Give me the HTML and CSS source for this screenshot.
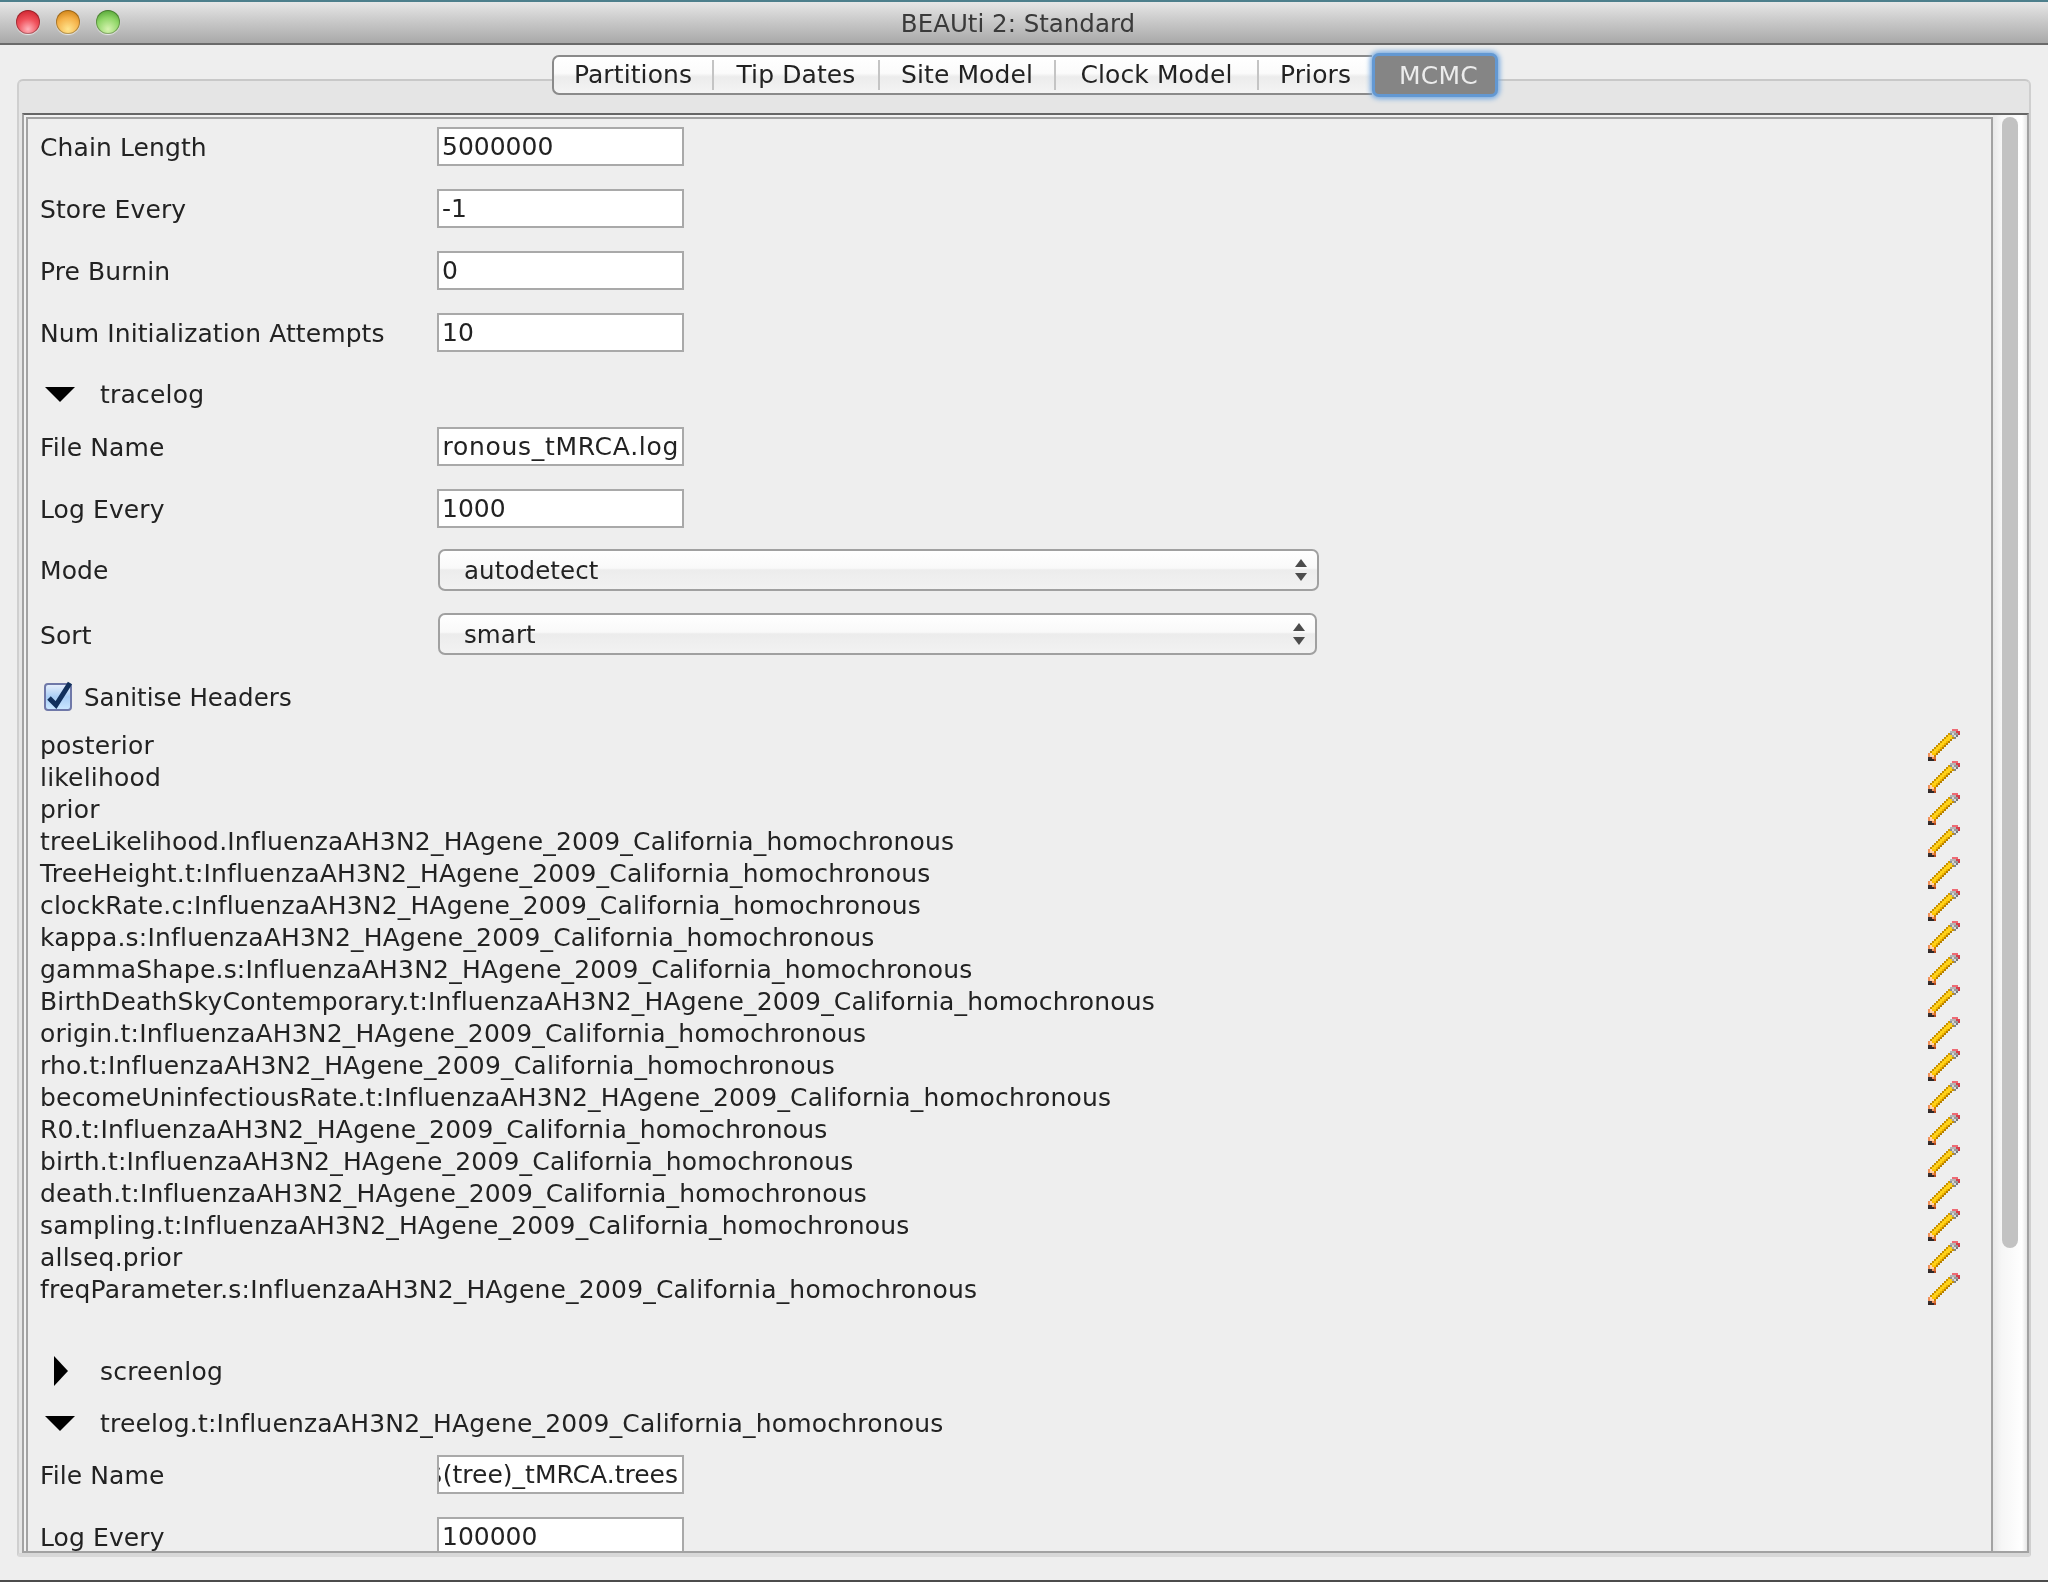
FILE: index.html
```html
<!DOCTYPE html>
<html lang="en">
<head>
<meta charset="utf-8">
<title>BEAUti 2: Standard</title>
<link rel="stylesheet" href="styles.css">
</head>
<body>
<svg class="defs" width="0" height="0" aria-hidden="true">
  <symbol id="pencil" viewBox="0 0 16 16" shape-rendering="crispEdges">
    <rect x="12" y="0" width="3" height="1" fill="#ee6a74"/>
    <rect x="11" y="1" width="3" height="1" fill="#b4b4b4"/><rect x="14" y="1" width="2" height="1" fill="#d8404c"/>
    <rect x="10" y="2" width="1" height="1" fill="#d09a00"/><rect x="11" y="2" width="1" height="1" fill="#8e8e8e"/><rect x="12" y="2" width="1" height="1" fill="#d6d6d6"/><rect x="13" y="2" width="2" height="1" fill="#9a9a9a"/><rect x="15" y="2" width="1" height="1" fill="#c83844"/>
    <rect x="9" y="3" width="1" height="1" fill="#c89000"/><rect x="10" y="3" width="2" height="1" fill="#ffd21a"/><rect x="12" y="3" width="1" height="1" fill="#a8a8a8"/><rect x="13" y="3" width="1" height="1" fill="#dcdcdc"/><rect x="14" y="3" width="1" height="1" fill="#777777"/>
    <rect x="8" y="4" width="1" height="1" fill="#c89000"/><rect x="9" y="4" width="3" height="1" fill="#ffd21a"/><rect x="12" y="4" width="1" height="1" fill="#c89000"/><rect x="13" y="4" width="1" height="1" fill="#858585"/>
    <rect x="7" y="5" width="1" height="1" fill="#c89000"/><rect x="8" y="5" width="3" height="1" fill="#ffd21a"/><rect x="11" y="5" width="1" height="1" fill="#b57f00"/>
    <rect x="6" y="6" width="1" height="1" fill="#c89000"/><rect x="7" y="6" width="2" height="1" fill="#ffd21a"/><rect x="9" y="6" width="1" height="1" fill="#efb400"/><rect x="10" y="6" width="1" height="1" fill="#b57f00"/>
    <rect x="5" y="7" width="1" height="1" fill="#c89000"/><rect x="6" y="7" width="2" height="1" fill="#ffd21a"/><rect x="8" y="7" width="1" height="1" fill="#efb400"/><rect x="9" y="7" width="1" height="1" fill="#b57f00"/>
    <rect x="4" y="8" width="1" height="1" fill="#c89000"/><rect x="5" y="8" width="2" height="1" fill="#ffd21a"/><rect x="7" y="8" width="1" height="1" fill="#efb400"/><rect x="8" y="8" width="1" height="1" fill="#b57f00"/>
    <rect x="3" y="9" width="1" height="1" fill="#c89000"/><rect x="4" y="9" width="2" height="1" fill="#ffd21a"/><rect x="6" y="9" width="1" height="1" fill="#efb400"/><rect x="7" y="9" width="1" height="1" fill="#b57f00"/>
    <rect x="2" y="10" width="1" height="1" fill="#c89000"/><rect x="3" y="10" width="2" height="1" fill="#ffd21a"/><rect x="5" y="10" width="1" height="1" fill="#efb400"/><rect x="6" y="10" width="1" height="1" fill="#b57f00"/>
    <rect x="1" y="11" width="1" height="1" fill="#c89000"/><rect x="2" y="11" width="2" height="1" fill="#ffd21a"/><rect x="4" y="11" width="1" height="1" fill="#efb400"/><rect x="5" y="11" width="1" height="1" fill="#b57f00"/>
    <rect x="0" y="12" width="1" height="1" fill="#f09058"/><rect x="1" y="12" width="1" height="1" fill="#ffd8b0"/><rect x="2" y="12" width="2" height="1" fill="#ffc400"/><rect x="4" y="12" width="1" height="1" fill="#b57f00"/>
    <rect x="0" y="13" width="1" height="1" fill="#f09058"/><rect x="1" y="13" width="2" height="1" fill="#ffd0a8"/><rect x="3" y="13" width="1" height="1" fill="#c88000"/>
    <rect x="0" y="14" width="2" height="1" fill="#3a3030"/><rect x="2" y="14" width="1" height="1" fill="#f09058"/><rect x="3" y="14" width="1" height="1" fill="#e07030"/>
    <rect x="0" y="15" width="3" height="1" fill="#302828"/><rect x="3" y="15" width="1" height="1" fill="#b04820"/>
  </symbol>
</svg>
<div class="window">
  <header class="titlebar">
    <div class="lights">
      <span class="light red"></span>
      <span class="light amber"></span>
      <span class="light green"></span>
    </div>
    <div class="title txt">BEAUti 2: Standard</div>
  </header>

  <nav class="tabs">
    <div class="tabgroup">
      <span class="tab txt w1">Partitions</span>
      <span class="tab txt w2">Tip Dates</span>
      <span class="tab txt w3">Site Model</span>
      <span class="tab txt w4">Clock Model</span>
      <span class="tab txt w5 last">Priors</span>
    </div>
    <span class="tab-active txt">MCMC</span>
  </nav>

  <main class="panel">
    <div class="panel-head"></div>
    <div class="scroll">
      <div class="view">
        <div class="row"><span class="label txt">Chain Length</span><span class="field txt">5000000</span></div>
        <div class="row"><span class="label txt">Store Every</span><span class="field txt">-1</span></div>
        <div class="row"><span class="label txt">Pre Burnin</span><span class="field txt">0</span></div>
        <div class="row"><span class="label txt">Num Initialization Attempts</span><span class="field txt">10</span></div>

        <div class="head head-trace"><span class="tri tri-down"></span><span class="txt">tracelog</span></div>
        <div class="row"><span class="label txt">File Name</span><span class="field field-clip field-log txt"><span>ronous_tMRCA.log</span></span></div>
        <div class="row row-tail"><span class="label txt">Log Every</span><span class="field txt">1000</span></div>
        <div class="row row-select"><span class="label txt">Mode</span><span class="select"><span class="txt">autodetect</span><span class="arrows"></span></span></div>
        <div class="row row-select row-sort"><span class="label txt">Sort</span><span class="select select-narrow"><span class="txt">smart</span><span class="arrows"></span></span></div>
        <div class="check-row"><span class="check"><svg viewBox="0 0 32 34" width="32" height="34"><path d="M7 19 L14 26 L28 4" fill="none" stroke="#12305c" stroke-width="5"/></svg></span><span class="txt spaced">Sanitise Headers</span></div>

        <ul class="items">
          <li><span class="txt">posterior</span><svg class="pen"><use href="#pencil"/></svg></li>
          <li><span class="txt">likelihood</span><svg class="pen"><use href="#pencil"/></svg></li>
          <li><span class="txt">prior</span><svg class="pen"><use href="#pencil"/></svg></li>
          <li><span class="txt">treeLikelihood.InfluenzaAH3N2_HAgene_2009_California_homochronous</span><svg class="pen"><use href="#pencil"/></svg></li>
          <li><span class="txt">TreeHeight.t:InfluenzaAH3N2_HAgene_2009_California_homochronous</span><svg class="pen"><use href="#pencil"/></svg></li>
          <li><span class="txt">clockRate.c:InfluenzaAH3N2_HAgene_2009_California_homochronous</span><svg class="pen"><use href="#pencil"/></svg></li>
          <li><span class="txt">kappa.s:InfluenzaAH3N2_HAgene_2009_California_homochronous</span><svg class="pen"><use href="#pencil"/></svg></li>
          <li><span class="txt">gammaShape.s:InfluenzaAH3N2_HAgene_2009_California_homochronous</span><svg class="pen"><use href="#pencil"/></svg></li>
          <li><span class="txt">BirthDeathSkyContemporary.t:InfluenzaAH3N2_HAgene_2009_California_homochronous</span><svg class="pen"><use href="#pencil"/></svg></li>
          <li><span class="txt">origin.t:InfluenzaAH3N2_HAgene_2009_California_homochronous</span><svg class="pen"><use href="#pencil"/></svg></li>
          <li><span class="txt">rho.t:InfluenzaAH3N2_HAgene_2009_California_homochronous</span><svg class="pen"><use href="#pencil"/></svg></li>
          <li><span class="txt">becomeUninfectiousRate.t:InfluenzaAH3N2_HAgene_2009_California_homochronous</span><svg class="pen"><use href="#pencil"/></svg></li>
          <li><span class="txt">R0.t:InfluenzaAH3N2_HAgene_2009_California_homochronous</span><svg class="pen"><use href="#pencil"/></svg></li>
          <li><span class="txt">birth.t:InfluenzaAH3N2_HAgene_2009_California_homochronous</span><svg class="pen"><use href="#pencil"/></svg></li>
          <li><span class="txt">death.t:InfluenzaAH3N2_HAgene_2009_California_homochronous</span><svg class="pen"><use href="#pencil"/></svg></li>
          <li><span class="txt">sampling.t:InfluenzaAH3N2_HAgene_2009_California_homochronous</span><svg class="pen"><use href="#pencil"/></svg></li>
          <li><span class="txt">allseq.prior</span><svg class="pen"><use href="#pencil"/></svg></li>
          <li><span class="txt">freqParameter.s:InfluenzaAH3N2_HAgene_2009_California_homochronous</span><svg class="pen"><use href="#pencil"/></svg></li>
        </ul>

        <div class="head head-screen"><span class="tri tri-right"></span><span class="txt">screenlog</span></div>
        <div class="head head-tree"><span class="tri tri-down"></span><span class="txt">treelog.t:InfluenzaAH3N2_HAgene_2009_California_homochronous</span></div>
        <div class="row"><span class="label txt">File Name</span><span class="field field-clip field-tree txt"><span>$(tree)_tMRCA.trees</span></span></div>
        <div class="row"><span class="label txt">Log Every</span><span class="field txt">100000</span></div>
      </div>
      <div class="track"><div class="thumb"></div></div>
    </div>
  </main>
</div>
</body>
</html>
```

FILE: styles.css
```css
html, body { margin: 0; padding: 0; }
body {
  font-family: "DejaVu Sans", "Liberation Sans", sans-serif;
  font-size: 25px;
  letter-spacing: 0.2px;
  color: #222222;
  background: #eeeeee;
}
.defs { position: absolute; }
.txt { filter: blur(0.45px); }

.window {
  display: flex;
  flex-direction: column;
  height: 1582px;
  box-sizing: border-box;
  border-bottom: 2px solid #4c4c4c;
  background: #eeeeee;
  overflow: hidden;
}

/* title bar */
.titlebar {
  display: grid;
  grid-template-columns: 1fr auto 1fr;
  align-items: center;
  height: 45px;
  flex: none;
  box-sizing: border-box;
  padding-right: 12px;
  border-top: 2px solid #4d7f8c;
  border-bottom: 2px solid #6a6a6a;
  background: linear-gradient(#e6e6e6, #c4c4c4 55%, #a9a9a9);
}
.lights { display: flex; gap: 16px; padding-left: 16px; margin-top: -2px; }
.light { width: 24px; height: 24px; border-radius: 50%; box-shadow: 0 1px 1px rgba(255,255,255,.7), inset 0 0 0 1px rgba(0,0,0,.28); }
.red { background: radial-gradient(circle at 50% 80%, #ffb3bb 0, #f0525c 45%, #d32a35 80%, #8d3a40 100%); }
.amber { background: radial-gradient(circle at 50% 80%, #ffe58e 0, #f5b24a 50%, #d58a1e 80%, #8f6a2e 100%); }
.green { background: radial-gradient(circle at 50% 80%, #d6f3b0 0, #90d668 50%, #5fae3f 80%, #4c7d3c 100%); }
.title { grid-column: 2; padding-top: 2px; color: #3a3a3a; font-size: 24.5px; letter-spacing: 0; text-align: center; }

/* tabs */
.tabs {
  display: flex;
  justify-content: center;
  align-items: stretch;
  flex: none;
  height: 40px;
  margin-top: 10px;
  padding-left: 2px;
  position: relative;
  z-index: 1;
}
.tabgroup {
  display: flex;
  align-items: center;
  box-sizing: border-box;
  border: 2px solid #8a8a8a;
  border-right: 0;
  border-radius: 7px 0 0 7px;
  background: linear-gradient(#ffffff, #fbfbfb 45%, #ececec 55%, #f4f4f4);
}
.tab {
  display: flex;
  align-items: center;
  justify-content: center;
  box-sizing: border-box;
  height: 30px;
  padding-bottom: 1px;
  letter-spacing: 0.1px;
  border-right: 2px solid #c4c4c4;
}
.tab.last { border-right: 0; }
.w1 { width: 160px; }
.w2 { width: 166px; }
.w3 { width: 176px; }
.w4 { width: 203px; }
.w5 { width: 113px; }
.tab-active {
  display: flex;
  align-items: center;
  justify-content: center;
  box-sizing: border-box;
  width: 126px;
  margin: -2px 0;
  height: 44px;
  padding-left: 7px;
  color: #ececec;
  background: #858585;
  border: 3px solid #6398d2;
  border-radius: 7px;
  box-shadow: 0 0 5px 2px #79abe0;
}

/* panel */
.panel {
  display: flex;
  flex-direction: column;
  flex: 1;
  min-height: 0;
  margin: -16px 17px 23px;
  box-sizing: border-box;
  border: 2px solid #cfcfcf;
  border-top-color: #c8c8c8;
  border-bottom-width: 4px;
  border-bottom-color: #d8d8d8;
  border-radius: 6px 6px 3px 3px;
  background: #e5e5e5;
}
.panel-head { height: 32px; flex: none; }
.scroll {
  display: flex;
  flex: 1;
  min-height: 0;
  margin-left: 3px;
  box-sizing: border-box;
  border: 2px solid #a2a2a2;
  border-top-color: #666666;
  background: #f2f2f2;
}
.view {
  flex: 1;
  min-width: 0;
  margin: 2px 0 0 2px;
  padding: 8px 0 0 12px;
  box-sizing: border-box;
  overflow: hidden;
  border: 2px solid #a2a2a2;
  border-bottom: 0;
  background: #eeeeee;
}
.track {
  flex: none;
  width: 34px;
  background: linear-gradient(90deg, #e8e8e8, #f6f6f6 25%, #fbfbfb 60%, #ffffff 85%, #e6e6e6);
}
.thumb {
  width: 16px;
  height: 1131px;
  margin-left: 9px;
  margin-top: 2px;
  border-radius: 8px;
  background: #c2c2c2;
}

/* form rows */
.row { display: flex; align-items: center; height: 39px; margin-bottom: 23px; }
.label { width: 397px; flex: none; padding-top: 1px; letter-spacing: 0.1px; }
.field {
  display: flex;
  align-items: center;
  box-sizing: border-box;
  width: 247px;
  height: 39px;
  padding-left: 3px;
  background: #ffffff;
  border: 2px solid #a9a9a9;
  overflow: hidden;
  white-space: nowrap;
  letter-spacing: 0;
}
.field-clip { justify-content: flex-end; padding: 0 3px 0 0; }
.field-clip span { flex: none; }
.field-log { letter-spacing: 0.7px; }
.field-tree { padding-right: 4px; }
.row-tail { margin-bottom: 21px; }
.row-select { height: 42px; margin-bottom: 22px; }
.row-select .label { padding-top: 0; }
.row-sort .label { padding-top: 2px; }
.row-sort { margin-bottom: 22px; }
.select {
  display: flex;
  align-items: center;
  justify-content: space-between;
  box-sizing: border-box;
  width: 881px;
  height: 42px;
  margin-left: 1px;
  padding: 0 10px 0 24px;
  border: 2px solid #a0a0a0;
  border-radius: 7px;
  font-size: 24.5px;
  letter-spacing: 0.1px;
  background: linear-gradient(#ffffff, #f9f9f9 45%, #ececec 50%, #f2f2f2);
}
.select-narrow { width: 879px; }
.arrows {
  width: 12px;
  height: 22px;
  position: relative;
}
.arrows::before, .arrows::after {
  content: "";
  position: absolute;
  left: 0;
  border-left: 6px solid transparent;
  border-right: 6px solid transparent;
}
.arrows::before { top: 0; border-bottom: 8px solid #4c4c4c; }
.arrows::after { bottom: 0; border-top: 8px solid #4c4c4c; }

/* section heads */
.head { display: flex; align-items: center; height: 38px; }
.head-trace { margin-bottom: 14px; }
.head-screen { margin-top: 47px; margin-bottom: 14px; }
.head-tree { margin-bottom: 13px; }
.tri { flex: none; width: 60px; height: 20px; position: relative; }
.tri::before { content: ""; position: absolute; }
.tri-down::before {
  left: 5px;
  top: 3px;
  border-left: 15px solid transparent;
  border-right: 15px solid transparent;
  border-top: 15px solid #000000;
}
.tri-right::before {
  left: 14px;
  top: -5px;
  border-top: 15px solid transparent;
  border-bottom: 15px solid transparent;
  border-left: 14px solid #000000;
}

/* checkbox */
.check-row { display: flex; align-items: center; height: 40px; margin-bottom: 12px; }
.spaced { font-size: 24.5px; letter-spacing: 0.05px; }
.check {
  display: block;
  position: relative;
  flex: none;
  width: 28px;
  height: 28px;
  margin: 0 12px 0 4px;
  box-sizing: border-box;
  border: 2px solid #6f78a8;
  border-radius: 4px;
  background: linear-gradient(#e4eefc, #a9cdf5 50%, #c9e6ff);
}
.check svg { position: absolute; left: -4px; top: -6px; }

/* list */
.items { list-style: none; margin: 0; padding: 0; }
.items li {
  display: flex;
  align-items: center;
  justify-content: space-between;
  height: 32px;
  padding-right: 31px;
  white-space: nowrap;
}
.pen { width: 32px; height: 32px; flex: none; }
```
